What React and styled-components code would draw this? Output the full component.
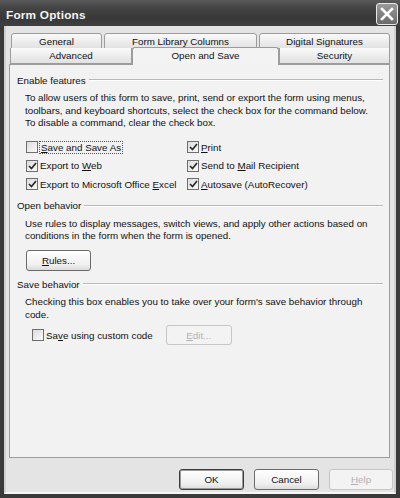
import React from "react";
import styled, { createGlobalStyle } from "styled-components";

const GlobalStyle = createGlobalStyle`
  html, body { margin: 0; padding: 0; background: #2e2e2e; }
  * { box-sizing: border-box; }
`;

const Window = styled.div`
  width: 400px;
  height: 498px;
  background: #3a3a3a;
  display: flex;
  flex-direction: column;
  font-family: "Liberation Sans", Arial, sans-serif;
  font-size: 9.8px;
  color: #111;
`;

const TitleBar = styled.div`
  height: 26px;
  flex: none;
  display: flex;
  align-items: center;
  justify-content: space-between;
  padding: 0 2px 0 6px;
  background: linear-gradient(#5a5a5a 0%, #444 30%, #383838 70%, #404040 100%);
`;

const Title = styled.div`
  color: #f4f4f4;
  font-weight: bold;
  font-size: 11.8px;
  letter-spacing: 0.2px;
  margin-top: 3px;
`;

const CloseButton = styled.div`
  width: 22px;
  height: 22px;
  margin-top: 1px;
  border: 1px solid #e8e8e8;
  border-radius: 3px;
  background: linear-gradient(#9a9a9a, #6a6a6a);
  display: flex;
  align-items: center;
  justify-content: center;
`;

const Frame = styled.div`
  flex: 1;
  margin: 0 4px 4px 4px;
  background: #e4e4e4;
  border-left: 2px solid #cfcfcf;
  border-right: 2px solid #cfcfcf;
  border-bottom: 2px solid #f6f6f6;
  display: flex;
  flex-direction: column;
  padding: 7px 4px 0 2px;
`;

const TabRow = styled.div`
  display: flex;
  height: ${(p) => p.$h}px;
  align-items: flex-end;
  padding-left: ${(p) => p.$indent}px;
  position: relative;
  z-index: ${(p) => p.$z};
`;

const Tab = styled.div`
  width: ${(p) => p.$w}px;
  height: ${(p) => (p.$active ? 18 : 16)}px;
  margin-left: ${(p) => p.$gap}px;
  border: 1px solid #9c9c9c;
  border-top: ${(p) => (p.$front && !p.$active ? "none" : "1px solid #9c9c9c")};
  border-bottom: ${(p) => (p.$active ? "none" : "1px solid #9c9c9c")};
  border-radius: ${(p) => (p.$front && !p.$active ? "0" : "3px 3px 0 0")};
  background: ${(p) =>
    p.$active ? "#f3f3f3" : "linear-gradient(#fafafa, #ebebeb 60%, #e2e2e2)"};
  display: flex;
  align-items: center;
  justify-content: center;
  padding-bottom: ${(p) => (p.$active ? 2 : 0)}px;
  margin-bottom: ${(p) => (p.$active ? -1 : 0)}px;
`;

const Panel = styled.div`
  height: 394px;
  flex: none;
  border: 1px solid #9c9c9c;
  background: #f2f2f2;
  padding: 8px 6px 0 7px;
  display: flex;
  flex-direction: column;
  margin-left: 1px;
`;

const Heading = styled.div`
  display: flex;
  align-items: center;
  height: 14px;
  margin-top: ${(p) => p.$mt || 0}px;
  &::after {
    content: "";
    flex: 1;
    margin-left: 3px;
    border-top: 1px solid #b8b8b8;
    border-bottom: 1px solid #fff;
  }
`;

const Para = styled.p`
  margin: ${(p) => p.$mt}px 0 0 8px;
  line-height: 12.7px;
  white-space: nowrap;
`;

const CheckGrid = styled.div`
  display: grid;
  grid-template-columns: 161px 1fr;
  grid-auto-rows: 18.5px;
  margin: 8px 0 0 9px;
`;

const CheckRow = styled.label`
  display: flex;
  align-items: center;
  gap: 2px;
`;

const Box = styled.span`
  width: 12px;
  height: 12px;
  flex: none;
  border: 1px solid #6e6e6e;
  background: linear-gradient(135deg, #dcdcdc, #fbfbfb);
  display: flex;
  align-items: center;
  justify-content: center;
`;

const Focus = styled.span`
  outline: 1px dotted #555;
  outline-offset: 0px;
  padding: 0 1px;
`;

const Button = styled.div`
  width: ${(p) => p.$w}px;
  height: ${(p) => p.$h || 21}px;
  border: 1px solid ${(p) => (p.$disabled ? "#c6c6c6" : p.$default ? "#3c3c3c" : "#6a6a6a")};
  border-radius: 3px;
  background: ${(p) =>
    p.$disabled ? "#f3f3f3" : "linear-gradient(#ffffff, #f0f0f0 70%, #dcdcdc)"};
  color: ${(p) => (p.$disabled ? "#b2b2b2" : "#111")};
  display: flex;
  align-items: center;
  justify-content: center;
  box-shadow: ${(p) => (p.$default ? "inset 0 0 0 1px #9a9a9a" : "none")};
`;

const RulesWrap = styled.div`
  margin: 7px 0 0 9px;
`;

const SaveRow = styled.div`
  display: flex;
  align-items: center;
  margin: 4px 0 0 15px;
`;

const EditWrap = styled.div`
  margin-left: 13px;
`;

const Footer = styled.div`
  flex: 1;
  display: flex;
  justify-content: flex-end;
  align-items: flex-start;
  gap: 10px;
  padding: 11px 0 0 0;
  margin-right: -3px;
`;

const U = styled.span`
  text-decoration: underline;
  text-underline-offset: 1px;
`;

const Check = ({ on }) => (
  <Box>
    {on && (
      <svg width="9" height="8" viewBox="0 0 9 8">
        <path d="M1 4 L3.5 6.5 L8 1" fill="none" stroke="#2a2a2a" strokeWidth="1.7" />
      </svg>
    )}
  </Box>
);

export default function App() {
  return (
    <>
      <GlobalStyle />
      <Window>
        <TitleBar>
          <Title>Form Options</Title>
          <CloseButton>
            <svg width="14" height="14" viewBox="0 0 14 14">
              <path d="M2 2 L12 12 M12 2 L2 12" stroke="#fff" strokeWidth="2.6" strokeLinecap="square" />
            </svg>
          </CloseButton>
        </TitleBar>
        <Frame>
          <TabRow $h={16} $indent={3} $z={0}>
            <Tab $w={91} $gap={0}>General</Tab>
            <Tab $w={153} $gap={2}>Form Library Columns</Tab>
            <Tab $w={131} $gap={2}>Digital Signatures</Tab>
          </TabRow>
          <TabRow $h={15} $indent={2} $z={2}>
            <Tab $w={122} $gap={0} $front>Advanced</Tab>
            <Tab $w={147} $gap={0} $front $active>Open and Save</Tab>
            <Tab $w={111} $gap={0} $front>Security</Tab>
          </TabRow>
          <Panel>
            <Heading>Enable features</Heading>
            <Para $mt={5}>
              To allow users of this form to save, print, send or export the form using menus,
              <br />
              toolbars, and keyboard shortcuts, select the check box for the command below.
              <br />
              To disable a command, clear the check box.
            </Para>
            <CheckGrid>
              <CheckRow>
                <Check />
                <Focus><U>S</U>ave and Save As</Focus>
              </CheckRow>
              <CheckRow>
                <Check on />
                <span><U>P</U>rint</span>
              </CheckRow>
              <CheckRow>
                <Check on />
                <span>Export to <U>W</U>eb</span>
              </CheckRow>
              <CheckRow>
                <Check on />
                <span>Send to <U>M</U>ail Recipient</span>
              </CheckRow>
              <CheckRow>
                <Check on />
                <span>Export to Microsoft Office <U>E</U>xcel</span>
              </CheckRow>
              <CheckRow>
                <Check on />
                <span><U>A</U>utosave (AutoRecover)</span>
              </CheckRow>
            </CheckGrid>
            <Heading $mt={5}>Open behavior</Heading>
            <Para $mt={5}>
              Use rules to display messages, switch views, and apply other actions based on
              <br />
              conditions in the form when the form is opened.
            </Para>
            <RulesWrap>
              <Button $w={65}><span><U>R</U>ules...</span></Button>
            </RulesWrap>
            <Heading $mt={6}>Save behavior</Heading>
            <Para $mt={5}>
              Checking this box enables you to take over your form's save behavior through
              <br />
              code.
            </Para>
            <SaveRow>
              <CheckRow>
                <Check />
                <span>Sa<U>v</U>e using custom code</span>
              </CheckRow>
              <EditWrap>
                <Button $w={66} $h={20} $disabled><span><U>E</U>dit...</span></Button>
              </EditWrap>
            </SaveRow>
          </Panel>
          <Footer>
            <Button $w={65} $default>OK</Button>
            <Button $w={65}>Cancel</Button>
            <Button $w={64} $disabled><span><U>H</U>elp</span></Button>
          </Footer>
        </Frame>
      </Window>
    </>
  );
}
